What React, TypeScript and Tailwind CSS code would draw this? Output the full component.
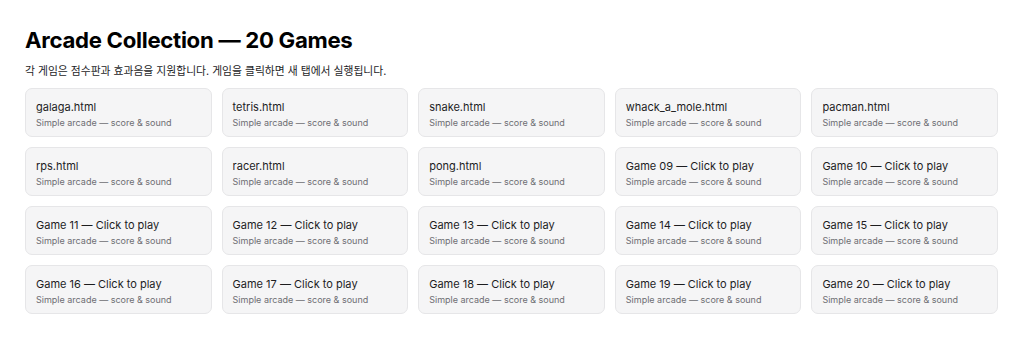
import React from 'react';

const named = ['galaga.html', 'tetris.html', 'snake.html', 'whack_a_mole.html', 'pacman.html', 'rps.html', 'racer.html', 'pong.html'];

const games: string[] = Array.from({ length: 20 }, (_, i) =>
  i < named.length ? named[i] : `Game ${String(i + 1).padStart(2, '0')} — Click to play`
);

const GameCard: React.FC<{ title: string }> = ({ title }) => (
  <div className="h-[49px] rounded-[7px] border border-[#e6e6e8] bg-[#f5f5f6] px-[10px] pt-[10px]">
    <div className="text-[11px] leading-[16px] text-[#1d1d1f]">{title}</div>
    <div className="mt-[1px] text-[9px] leading-[14px] text-[#6e6e73]">Simple arcade — score &amp; sound</div>
  </div>
);

export default function App() {
  return (
    <div className="min-h-[339px] bg-white px-[25px] pt-[26px] font-['Inter','Noto_Sans_CJK_KR',sans-serif]">
      <h1 className="text-[22.2px] font-bold leading-[28px] tracking-[-0.3px] text-black">Arcade Collection — 20 Games</h1>
      <p className="mt-[10px] text-[10.8px] leading-[16px] text-[#1d1d1f]">
        각 게임은 점수판과 효과음을 지원합니다. 게임을 클릭하면 새 탭에서 실행됩니다.
      </p>
      <div className="mt-[8px] grid w-[973px] grid-cols-5 gap-x-[10px] gap-y-[10px]">
        {games.map((g) => (
          <GameCard key={g} title={g} />
        ))}
      </div>
    </div>
  );
}
